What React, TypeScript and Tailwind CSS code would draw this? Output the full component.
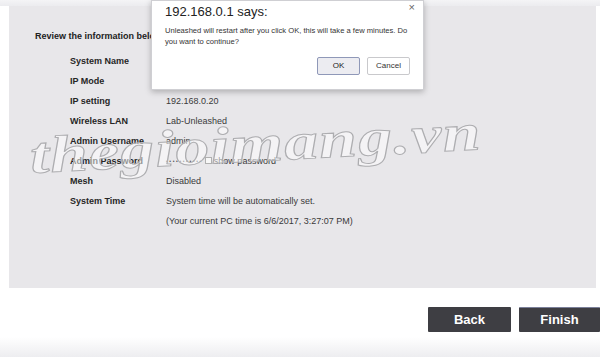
import React from 'react';

const rows: { label: string; value: React.ReactNode }[] = [
    { label: 'System Name', value: 'Unleashed' },
    { label: 'IP Mode', value: 'Manual' },
    { label: 'IP setting', value: '192.168.0.20' },
    { label: 'Wireless LAN', value: 'Lab-Unleashed' },
    { label: 'Admin Username', value: 'admin' },
    {
        label: 'Admin Password',
        value: (
            <span className="flex items-center">
                <span className="text-[5px] tracking-[1.6px] text-[#555]">•••••••••••</span>
                <span className="ml-[2px] mr-[2px] inline-block h-[7px] w-[7px] border border-[#b0b0b0] bg-[#f7f7f7]" />
                show password
            </span>
        ),
    },
    { label: 'Mesh', value: 'Disabled' },
    {
        label: 'System Time',
        value: (
            <div className="flex flex-col gap-[8px]">
                <span>System time will be automatically set.</span>
                <span>(Your current PC time is 6/6/2017, 3:27:07 PM)</span>
            </div>
        ),
    },
];

export default function App() {
    return (
        <div className="relative w-[600px] h-[357px] overflow-hidden bg-white font-['Liberation_Sans',Arial,sans-serif]">
            <div className="h-[6px] bg-gradient-to-b from-[#f4f4f6] to-[#ececef]" />
            <div className="ml-[9px] mr-[4px] h-[282px] bg-[#e8e7ea] pt-[24px] pl-[26px]">
                <div className="text-[9px] font-bold text-[#222] whitespace-nowrap">
                    Review the information below and click Finish to complete the setup.
                </div>
                <div className="mt-[11px] pl-[35px] flex flex-col gap-[8px]">
                    {rows.map((r) => (
                        <div key={r.label} className="flex items-start h-[12px] leading-[12px]">
                            <div className="w-[96px] shrink-0 text-[9px] font-bold text-[#262626]">{r.label}</div>
                            <div className="text-[9px] text-[#3a3a3a]">{r.value}</div>
                        </div>
                    ))}
                </div>
            </div>
            <div className="mt-[19px] flex justify-end gap-[8px]">
                <button className="w-[83px] h-[25px] bg-[#3e3e43] text-white text-[13px] font-bold rounded-[1px]">
                    Back
                </button>
                <button className="w-[81px] h-[25px] bg-[#3e3e43] text-white text-[13px] font-bold rounded-[1px] border-t border-[#7a7f99]">
                    Finish
                </button>
            </div>
            <div className="absolute left-0 right-0 bottom-0 h-[20px] bg-gradient-to-b from-white to-[#ededf0]" />

            {/* watermark */}
            <div className="pointer-events-none absolute left-[30px] top-[130px] origin-left -rotate-3 scale-x-[1.3] text-[52px] italic font-bold tracking-[1px] text-white/50 [-webkit-text-stroke:1px_#adadb0] font-['Liberation_Serif',serif] leading-none whitespace-nowrap">
                thegioimang.vn
            </div>

            {/* alert dialog */}
            <div className="absolute left-[151px] top-0 w-[273px] h-[90px] bg-white border border-[#cfcfd3] shadow-[0_2px_6px_rgba(0,0,0,0.25)]">
                <div className="absolute right-[8px] top-[-2px] text-[11px] text-[#666]">×</div>
                <div className="pl-[13px] pt-[1px] text-[13px] text-[#222]">192.168.0.1 says:</div>
                <div className="pl-[13px] mt-[3px] text-[7.6px] leading-[11px] text-[#333] whitespace-nowrap">
                    Unleashed will restart after you click OK, this will take a few minutes. Do
                    <br />
                    you want to continue?
                </div>
                <div className="mt-[10px] pr-[13px] flex justify-end gap-[7px]">
                    <button className="w-[43px] h-[18px] text-[8px] text-[#222] bg-[#ececf1] border border-[#8f98b8] rounded-[2px]">
                        OK
                    </button>
                    <button className="w-[43px] h-[18px] text-[8px] text-[#333] bg-white border border-[#c9c9cc] rounded-[2px]">
                        Cancel
                    </button>
                </div>
            </div>
        </div>
    );
}
